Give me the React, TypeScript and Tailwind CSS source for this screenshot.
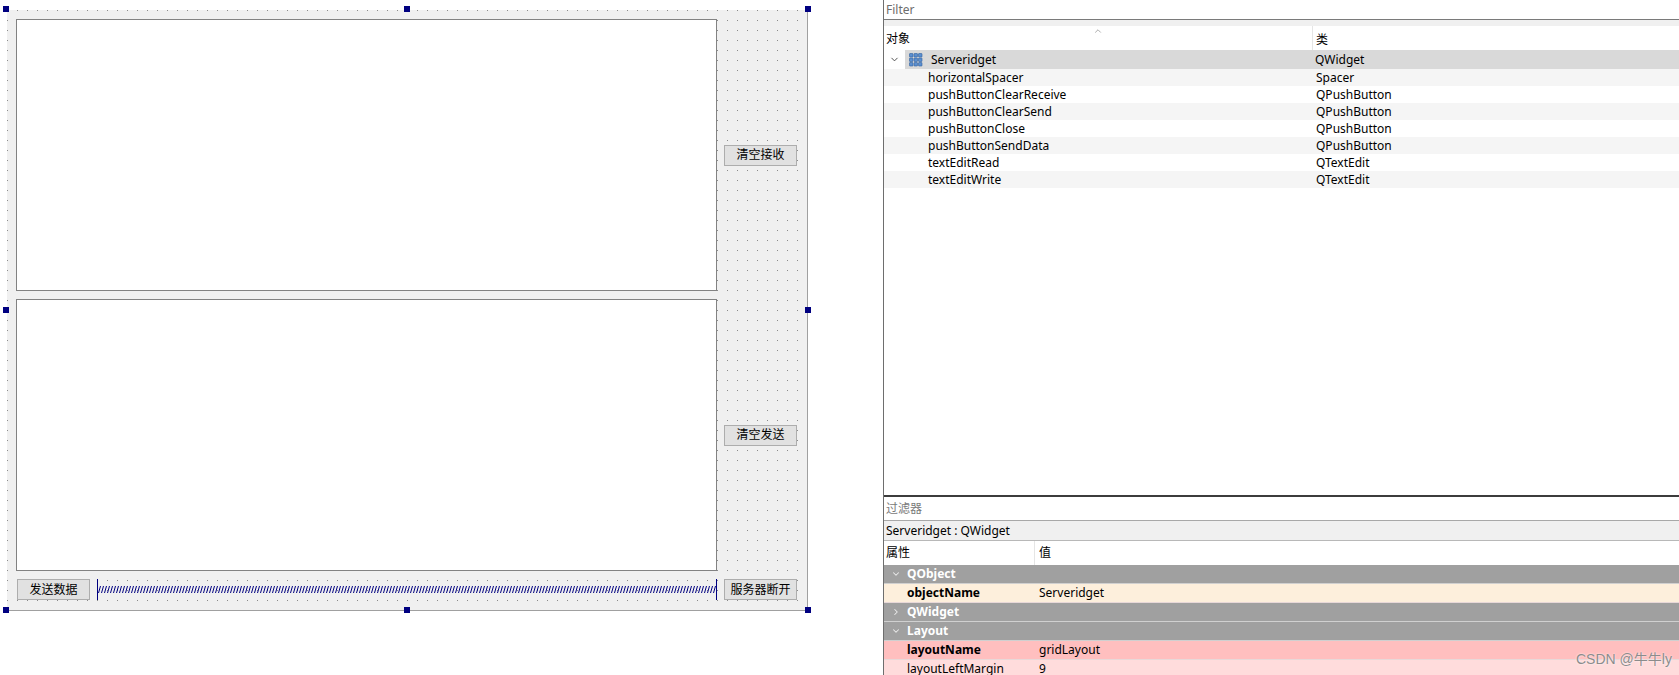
import { ChevronDown, ChevronRight, ChevronUp } from "lucide-react";

const FONT = "font-['Noto_Sans','Noto_Sans_CJK_SC',sans-serif]";

const HANDLES = [
  "left-[3px] top-[6px]",
  "left-[404px] top-[6px]",
  "left-[805px] top-[6px]",
  "left-[3px] top-[307px]",
  "left-[805px] top-[307px]",
  "left-[3px] top-[607px]",
  "left-[404px] top-[607px]",
  "left-[805px] top-[607px]",
];

const CHILDREN = [
  ["horizontalSpacer", "Spacer"],
  ["pushButtonClearReceive", "QPushButton"],
  ["pushButtonClearSend", "QPushButton"],
  ["pushButtonClose", "QPushButton"],
  ["pushButtonSendData", "QPushButton"],
  ["textEditRead", "QTextEdit"],
  ["textEditWrite", "QTextEdit"],
];

function QtButton({ label }: { label: string }) {
  return (
    <div className="flex h-[21px] w-[73px] shrink-0 items-center justify-center border border-[#adadad] bg-[#e1e1e1] text-[12px] text-black">
      {label}
    </div>
  );
}

function Spacer() {
  return (
    <div className="flex h-[21px] flex-1 items-center border-x border-[#000080]">
      <svg width="100%" height="7" className="block">
        <defs>
          <pattern id="zig" width="3" height="7" patternUnits="userSpaceOnUse">
            <line x1="0.5" y1="7" x2="2.5" y2="0" stroke="#000080" strokeWidth="1" />
          </pattern>
        </defs>
        <rect width="100%" height="7" fill="url(#zig)" />
      </svg>
    </div>
  );
}

function FormEditor() {
  return (
    <div className="relative h-full w-[883px] shrink-0 pl-[7px] pt-[10px]">
      <div className="h-[601px] w-[801px] border-b border-r border-[#a0a0a0] bg-[#f0f0f0] bg-[radial-gradient(circle_at_0.5px_0.5px,#8a8a8a_0.6px,transparent_0.8px)] bg-[size:10px_10px] pl-[9px] pt-[9px]">
        <div className="grid grid-cols-[701px_73px] grid-rows-[272px_272px_21px] gap-x-[7px] gap-y-[8px]">
          <div className="border border-[#828282] bg-white" />
          <div className="flex items-center">
            <QtButton label="清空接收" />
          </div>
          <div className="border border-[#828282] bg-white" />
          <div className="flex items-center">
            <QtButton label="清空发送" />
          </div>
          <div className="flex items-center gap-[7px] pl-[1px]">
            <QtButton label="发送数据" />
            <Spacer />
          </div>
          <QtButton label="服务器断开" />
        </div>
      </div>
      {HANDLES.map((h) => (
        <div key={h} className={`absolute h-[6px] w-[6px] bg-[#000080] ${h}`} />
      ))}
    </div>
  );
}

function WidgetIcon() {
  const cells = [];
  for (let r = 0; r < 3; r++)
    for (let c = 0; c < 3; c++)
      cells.push(
        <rect key={`${r}${c}`} x={0.5 + c * 4.5} y={0.5 + r * 4.5} width="3.5" height="3.5" fill="#5b8fd0" stroke="#2f5f9e" strokeWidth="0.6" rx="0.5" />
      );
  return (
    <svg width="14" height="14" viewBox="0 0 14 14" className="shrink-0">
      {cells}
    </svg>
  );
}

function ObjectInspector() {
  return (
    <div className="flex h-[497px] shrink-0 flex-col border-b-2 border-[#3c3c3c]">
      <div className="flex h-[20px] shrink-0 items-center border-b border-[#7a7a7a] pl-[2px] text-[12px] text-[#6d6d6d]">Filter</div>
      <div className="h-[6px] shrink-0 bg-[#f0f0f0]" />
      <div className="relative flex h-[24px] shrink-0 items-center text-[12px] text-black">
        <div className="w-[428px] pl-[2px] pt-[2px]">对象</div>
        <div className="h-full border-l border-[#e5e5e5] pl-[3px] pt-[2px] leading-[24px]">类</div>
        <ChevronUp className="absolute left-[209px] top-[0px] text-[#7a7a7a]" size={10} strokeWidth={1.5} />
      </div>
      <div className="flex h-[19px] shrink-0 items-center text-[12px] text-black">
        <div className="flex w-[21px] justify-center">
          <ChevronDown size={11} strokeWidth={2} className="text-[#444]" />
        </div>
        <div className="flex h-full flex-1 items-center bg-[#d9d9d9]">
          <div className="flex w-[407px] items-center gap-[8px] pl-[4px]">
            <WidgetIcon />
            <span>Serveridget</span>
          </div>
          <span className="pl-[3px]">QWidget</span>
        </div>
      </div>
      {CHILDREN.map(([name, cls], i) => (
        <div
          key={name}
          className={`flex h-[17px] shrink-0 items-center text-[12px] text-black ${i % 2 === 0 ? "bg-[#f5f5f5]" : "bg-white"}`}
        >
          <div className="w-[428px] pl-[44px]">{name}</div>
          <div className="pl-[4px]">{cls}</div>
        </div>
      ))}
      <div className="flex-1 bg-white" />
    </div>
  );
}

function PropRow({
  name,
  value,
  bg,
  bold,
}: {
  name: string;
  value: string;
  bg: string;
  bold?: boolean;
}) {
  return (
    <div className={`flex h-[19px] shrink-0 items-center border-b border-[#e8d8d8] text-[12px] text-black ${bg}`}>
      <div className={`flex h-full w-[151px] items-center pl-[23px] ${bold ? "font-bold" : ""}`}>{name}</div>
      <div className="pl-[4px]">{value}</div>
    </div>
  );
}

function GroupRow({ name, open }: { name: string; open: boolean }) {
  return (
    <div className="flex h-[19px] shrink-0 items-center border-b border-[#d0d0d0] bg-[#a0a0a0] text-[12px] font-bold text-white">
      <div className="flex w-[23px] justify-center">
        {open ? (
          <ChevronDown size={10} strokeWidth={2.5} className="text-[#ececec]" />
        ) : (
          <ChevronRight size={10} strokeWidth={2.5} className="text-[#ececec]" />
        )}
      </div>
      <span>{name}</span>
    </div>
  );
}

function PropertyEditor() {
  return (
    <div className="flex min-h-0 flex-1 flex-col overflow-hidden">
      <div className="flex h-[24px] shrink-0 items-center border-b border-[#a8a8a8] pl-[2px] text-[12px] text-[#7a7a7a]">过滤器</div>
      <div className="flex h-[20px] shrink-0 items-center border-b border-[#b8b8b8] bg-[#f0f0f0] pl-[2px] text-[12px] text-black">
        Serveridget : QWidget
      </div>
      <div className="flex h-[24px] shrink-0 items-center text-[12px] text-black">
        <div className="flex h-full w-[151px] items-center border-r border-[#e5e5e5] pl-[2px]">属性</div>
        <div className="pl-[4px]">值</div>
      </div>
      <GroupRow name="QObject" open />
      <PropRow name="objectName" value="Serveridget" bg="bg-[#fdefdc]" bold />
      <GroupRow name="QWidget" open={false} />
      <GroupRow name="Layout" open />
      <PropRow name="layoutName" value="gridLayout" bg="bg-[#ffbfbf]" bold />
      <PropRow name="layoutLeftMargin" value="9" bg="bg-[#ffdcdc]" />
    </div>
  );
}

export default function App() {
  return (
    <div className={`relative flex h-[675px] w-[1679px] overflow-hidden bg-white ${FONT}`}>
      <FormEditor />
      <div className="flex h-full flex-1 flex-col border-l border-[#6e6e6e]">
        <ObjectInspector />
        <PropertyEditor />
      </div>
      <div className="pointer-events-none absolute left-[1576px] top-[649px] font-['Liberation_Sans','Noto_Sans_CJK_SC',sans-serif] text-[14px] text-[#8c8c8c] [text-shadow:0_0_2px_#fff]">
        CSDN @牛牛ly
      </div>
    </div>
  );
}
